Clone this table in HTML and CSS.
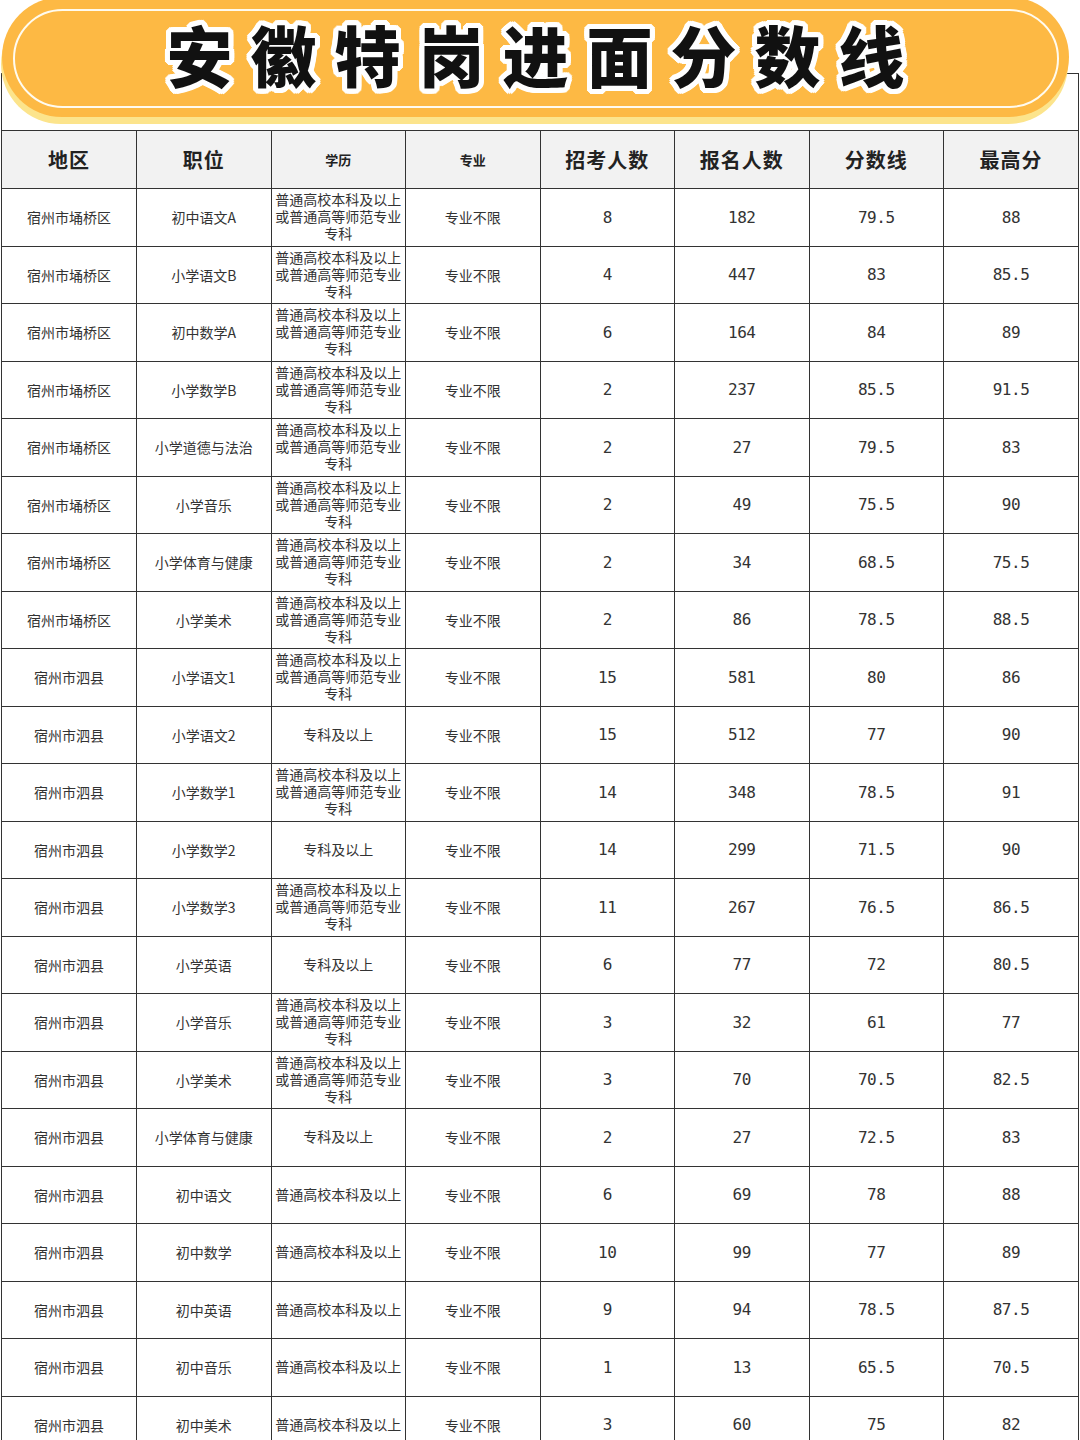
FILE: index.html
```html
<!DOCTYPE html>
<html lang="zh-CN">
<head>
<meta charset="utf-8">
<title>安徽特岗进面分数线</title>
<link rel="stylesheet" href="styles.css">
</head>
<body>
<div class="sheet">
  <div class="banner"><h1 class="title">安徽特岗进面分数线</h1></div>
  <table class="grid">
    <colgroup><col><col><col><col><col><col><col><col></colgroup>
    <thead>
      <tr><th>地区</th><th>职位</th><th class="small">学历</th><th class="small">专业</th><th>招考人数</th><th>报名人数</th><th>分数线</th><th>最高分</th></tr>
    </thead>
    <tbody>
      <tr><td>宿州市埇桥区</td><td>初中语文A</td><td class="edu">普通高校本科及以上<br>或普通高等师范专业<br>专科</td><td>专业不限</td><td class="num">8</td><td class="num">182</td><td class="num">79.5</td><td class="num">88</td></tr>
      <tr><td>宿州市埇桥区</td><td>小学语文B</td><td class="edu">普通高校本科及以上<br>或普通高等师范专业<br>专科</td><td>专业不限</td><td class="num">4</td><td class="num">447</td><td class="num">83</td><td class="num">85.5</td></tr>
      <tr><td>宿州市埇桥区</td><td>初中数学A</td><td class="edu">普通高校本科及以上<br>或普通高等师范专业<br>专科</td><td>专业不限</td><td class="num">6</td><td class="num">164</td><td class="num">84</td><td class="num">89</td></tr>
      <tr><td>宿州市埇桥区</td><td>小学数学B</td><td class="edu">普通高校本科及以上<br>或普通高等师范专业<br>专科</td><td>专业不限</td><td class="num">2</td><td class="num">237</td><td class="num">85.5</td><td class="num">91.5</td></tr>
      <tr><td>宿州市埇桥区</td><td>小学道德与法治</td><td class="edu">普通高校本科及以上<br>或普通高等师范专业<br>专科</td><td>专业不限</td><td class="num">2</td><td class="num">27</td><td class="num">79.5</td><td class="num">83</td></tr>
      <tr><td>宿州市埇桥区</td><td>小学音乐</td><td class="edu">普通高校本科及以上<br>或普通高等师范专业<br>专科</td><td>专业不限</td><td class="num">2</td><td class="num">49</td><td class="num">75.5</td><td class="num">90</td></tr>
      <tr><td>宿州市埇桥区</td><td>小学体育与健康</td><td class="edu">普通高校本科及以上<br>或普通高等师范专业<br>专科</td><td>专业不限</td><td class="num">2</td><td class="num">34</td><td class="num">68.5</td><td class="num">75.5</td></tr>
      <tr><td>宿州市埇桥区</td><td>小学美术</td><td class="edu">普通高校本科及以上<br>或普通高等师范专业<br>专科</td><td>专业不限</td><td class="num">2</td><td class="num">86</td><td class="num">78.5</td><td class="num">88.5</td></tr>
      <tr><td>宿州市泗县</td><td>小学语文1</td><td class="edu">普通高校本科及以上<br>或普通高等师范专业<br>专科</td><td>专业不限</td><td class="num">15</td><td class="num">581</td><td class="num">80</td><td class="num">86</td></tr>
      <tr><td>宿州市泗县</td><td>小学语文2</td><td class="edu">专科及以上</td><td>专业不限</td><td class="num">15</td><td class="num">512</td><td class="num">77</td><td class="num">90</td></tr>
      <tr><td>宿州市泗县</td><td>小学数学1</td><td class="edu">普通高校本科及以上<br>或普通高等师范专业<br>专科</td><td>专业不限</td><td class="num">14</td><td class="num">348</td><td class="num">78.5</td><td class="num">91</td></tr>
      <tr><td>宿州市泗县</td><td>小学数学2</td><td class="edu">专科及以上</td><td>专业不限</td><td class="num">14</td><td class="num">299</td><td class="num">71.5</td><td class="num">90</td></tr>
      <tr><td>宿州市泗县</td><td>小学数学3</td><td class="edu">普通高校本科及以上<br>或普通高等师范专业<br>专科</td><td>专业不限</td><td class="num">11</td><td class="num">267</td><td class="num">76.5</td><td class="num">86.5</td></tr>
      <tr><td>宿州市泗县</td><td>小学英语</td><td class="edu">专科及以上</td><td>专业不限</td><td class="num">6</td><td class="num">77</td><td class="num">72</td><td class="num">80.5</td></tr>
      <tr><td>宿州市泗县</td><td>小学音乐</td><td class="edu">普通高校本科及以上<br>或普通高等师范专业<br>专科</td><td>专业不限</td><td class="num">3</td><td class="num">32</td><td class="num">61</td><td class="num">77</td></tr>
      <tr><td>宿州市泗县</td><td>小学美术</td><td class="edu">普通高校本科及以上<br>或普通高等师范专业<br>专科</td><td>专业不限</td><td class="num">3</td><td class="num">70</td><td class="num">70.5</td><td class="num">82.5</td></tr>
      <tr><td>宿州市泗县</td><td>小学体育与健康</td><td class="edu">专科及以上</td><td>专业不限</td><td class="num">2</td><td class="num">27</td><td class="num">72.5</td><td class="num">83</td></tr>
      <tr><td>宿州市泗县</td><td>初中语文</td><td class="edu">普通高校本科及以上</td><td>专业不限</td><td class="num">6</td><td class="num">69</td><td class="num">78</td><td class="num">88</td></tr>
      <tr><td>宿州市泗县</td><td>初中数学</td><td class="edu">普通高校本科及以上</td><td>专业不限</td><td class="num">10</td><td class="num">99</td><td class="num">77</td><td class="num">89</td></tr>
      <tr><td>宿州市泗县</td><td>初中英语</td><td class="edu">普通高校本科及以上</td><td>专业不限</td><td class="num">9</td><td class="num">94</td><td class="num">78.5</td><td class="num">87.5</td></tr>
      <tr><td>宿州市泗县</td><td>初中音乐</td><td class="edu">普通高校本科及以上</td><td>专业不限</td><td class="num">1</td><td class="num">13</td><td class="num">65.5</td><td class="num">70.5</td></tr>
      <tr><td>宿州市泗县</td><td>初中美术</td><td class="edu">普通高校本科及以上</td><td>专业不限</td><td class="num">3</td><td class="num">60</td><td class="num">75</td><td class="num">82</td></tr>
    </tbody>
  </table>
</div>
</body>
</html>
```
FILE: styles.css
```css
* { box-sizing: border-box; }
html, body {
  margin: 0;
  padding: 0;
  background: #ffffff;
}
body {
  width: 1080px;
  height: 1440px;
  overflow: hidden;
  font-family: "Noto Sans CJK SC", "Noto Sans", sans-serif;
  color: #333;
}
.sheet {
  margin: 73px 1px 0 1px;
  border: 1px solid #333;
  border-bottom: none;
}
.banner {
  position: relative;
  z-index: 2;
  margin: -77px 0 13px 0;
  width: 1067px;
  height: 120px;
  background: #fdb944;
  border-radius: 60px;
  box-shadow: -1px 7px 0 #fce48c;
  display: flex;
  align-items: center;
  justify-content: center;
}
.banner::before {
  content: "";
  position: absolute;
  left: 11px;
  right: 10px;
  top: 12px;
  bottom: 9px;
  border: 2.5px solid #fffbef;
  border-radius: 50px;
}
.title {
  position: relative;
  margin: -8px 0 0 18px;
  font-family: "Noto Sans CJK SC", sans-serif;
  font-weight: 900;
  font-size: 66px;
  line-height: 1;
  letter-spacing: 18px;
  color: #111;
  text-shadow:
    5px 0 0 #fff, -5px 0 0 #fff, 0 5px 0 #fff, 0 -5px 0 #fff,
    4px 3px 0 #fff, -4px 3px 0 #fff, 4px -3px 0 #fff, -4px -3px 0 #fff,
    3px 4px 0 #fff, -3px 4px 0 #fff, 3px -4px 0 #fff, -3px -4px 0 #fff,
    5px 2px 0 #fff, -5px 2px 0 #fff, 5px -2px 0 #fff, -5px -2px 0 #fff,
    2px 5px 0 #fff, -2px 5px 0 #fff, 2px -5px 0 #fff, -2px -5px 0 #fff;
}
.grid {
  width: 1076px;
  table-layout: fixed;
  border-collapse: collapse;
}
.grid col { width: 134.5px; }
.grid th, .grid td {
  border: 1px solid #333;
  text-align: center;
  vertical-align: middle;
  padding: 0;
}
.grid tr > :first-child { border-left: none; }
.grid tr > :last-child { border-right: none; }
.grid th {
  height: 58px;
  background: #f2f2f2;
  font-size: 20px;
  font-weight: 700;
  color: #222;
  letter-spacing: 1px;
}
.grid th.small {
  font-size: 13px;
  letter-spacing: 0;
}
.grid td {
  height: 57.5px;
  font-size: 14px;
  color: #333;
}
.grid td.edu {
  font-family: "Liberation Sans", "Noto Sans CJK SC", sans-serif;
  font-size: 14px;
  line-height: 17px;
  padding-top: 1px;
}
.grid td.num {
  font-family: "DejaVu Sans Mono", "Noto Sans", sans-serif;
  font-size: 16px;
  letter-spacing: -0.5px;
}
```
